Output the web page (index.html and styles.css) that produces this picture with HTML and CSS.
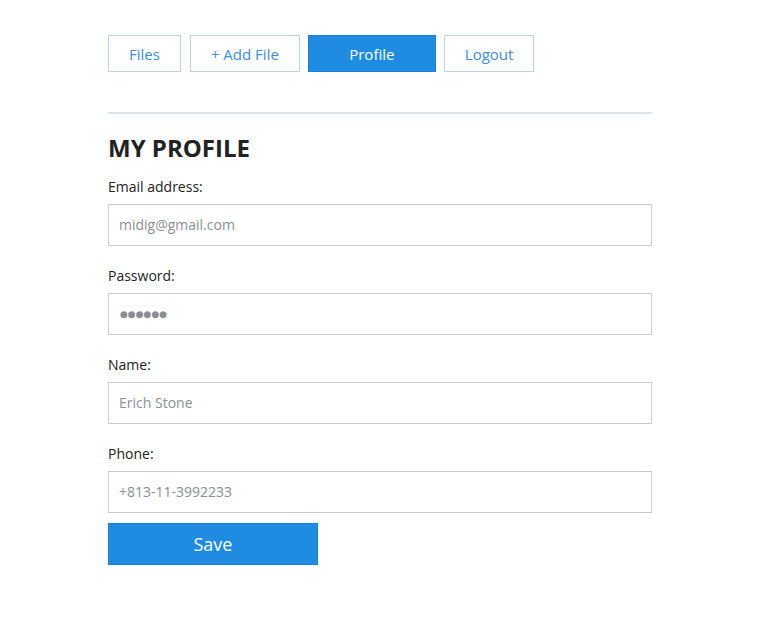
FILE: index.html
```html
<!DOCTYPE html>
<html>
<head>
<meta charset="utf-8">
<link rel="stylesheet" href="styles.css">
</head>
<body>
<div class="container">
  <nav class="nav">
    <a class="nav-btn">Files</a>
    <a class="nav-btn">+ Add File</a>
    <a class="nav-btn active">Profile</a>
    <a class="nav-btn">Logout</a>
  </nav>
  <hr class="divider">
  <h1 class="title">MY PROFILE</h1>
  <form class="form">
    <div class="group">
      <label class="label">Email address:</label>
      <input class="input" type="text" placeholder="midig@gmail.com">
    </div>
    <div class="group">
      <label class="label">Password:</label>
      <input class="input pw" type="text" value="●●●●●●">
    </div>
    <div class="group">
      <label class="label">Name:</label>
      <input class="input" type="text" placeholder="Erich Stone">
    </div>
    <div class="group last">
      <label class="label">Phone:</label>
      <input class="input" type="text" placeholder="+813-11-3992233">
    </div>
    <button class="save" type="button">Save</button>
  </form>
</div>
</body>
</html>
```
FILE: styles.css
```css
* { box-sizing: border-box; }
body {
  margin: 0;
  background: #fff;
  font-family: "Open Sans", "DejaVu Sans", sans-serif;
  color: #222;
}
.container {
  width: 544px;
  margin-left: 108px;
  padding-top: 35px;
}
.nav {
  display: flex;
  gap: 8px;
}
.nav-btn {
  display: flex;
  align-items: center;
  justify-content: center;
  height: 37px;
  padding: 0 20px;
  border: 1px solid #bdd3e8;
  color: #3b8ee2;
  font-size: 15px;
  text-decoration: none;
}
.nav-btn:first-child { margin-right: 1px; }
.nav-btn.active {
  background: #1f8ce2;
  border-color: #1a80d4;
  color: #fff;
  width: 128px;
  padding: 0;
}
.divider {
  margin: 40px 0 0;
  border: 0;
  height: 2px;
  background: #dee3e8;
}
.title {
  margin: 18px 0 0;
  font-size: 24px;
  font-weight: 700;
  line-height: 32px;
  color: #222;
}
.form { margin-top: 13px; }
.group { margin-bottom: 20px; }
.group.last { margin-bottom: 10px; }
.label {
  display: block;
  font-size: 14px;
  line-height: 20px;
  color: #222;
  margin-bottom: 7px;
}
.input {
  display: block;
  width: 100%;
  height: 42px;
  border: 1px solid #c9ccd1;
  padding: 0 10px 2px;
  font-family: inherit;
  font-size: 14px;
  color: #888;
  outline: none;
}
.input::placeholder { color: #8c8f93; }
.input.pw {
  color: #8a8d92;
  font-family: "DejaVu Sans", sans-serif;
  font-size: 9px;
  padding: 0 10px 0 11px;
}
.save {
  display: block;
  width: 210px;
  height: 42px;
  background: #1f8ce2;
  border: 1px solid #1a80d4;
  color: #fff;
  font-family: inherit;
  font-size: 18px;
  cursor: pointer;
}
```
